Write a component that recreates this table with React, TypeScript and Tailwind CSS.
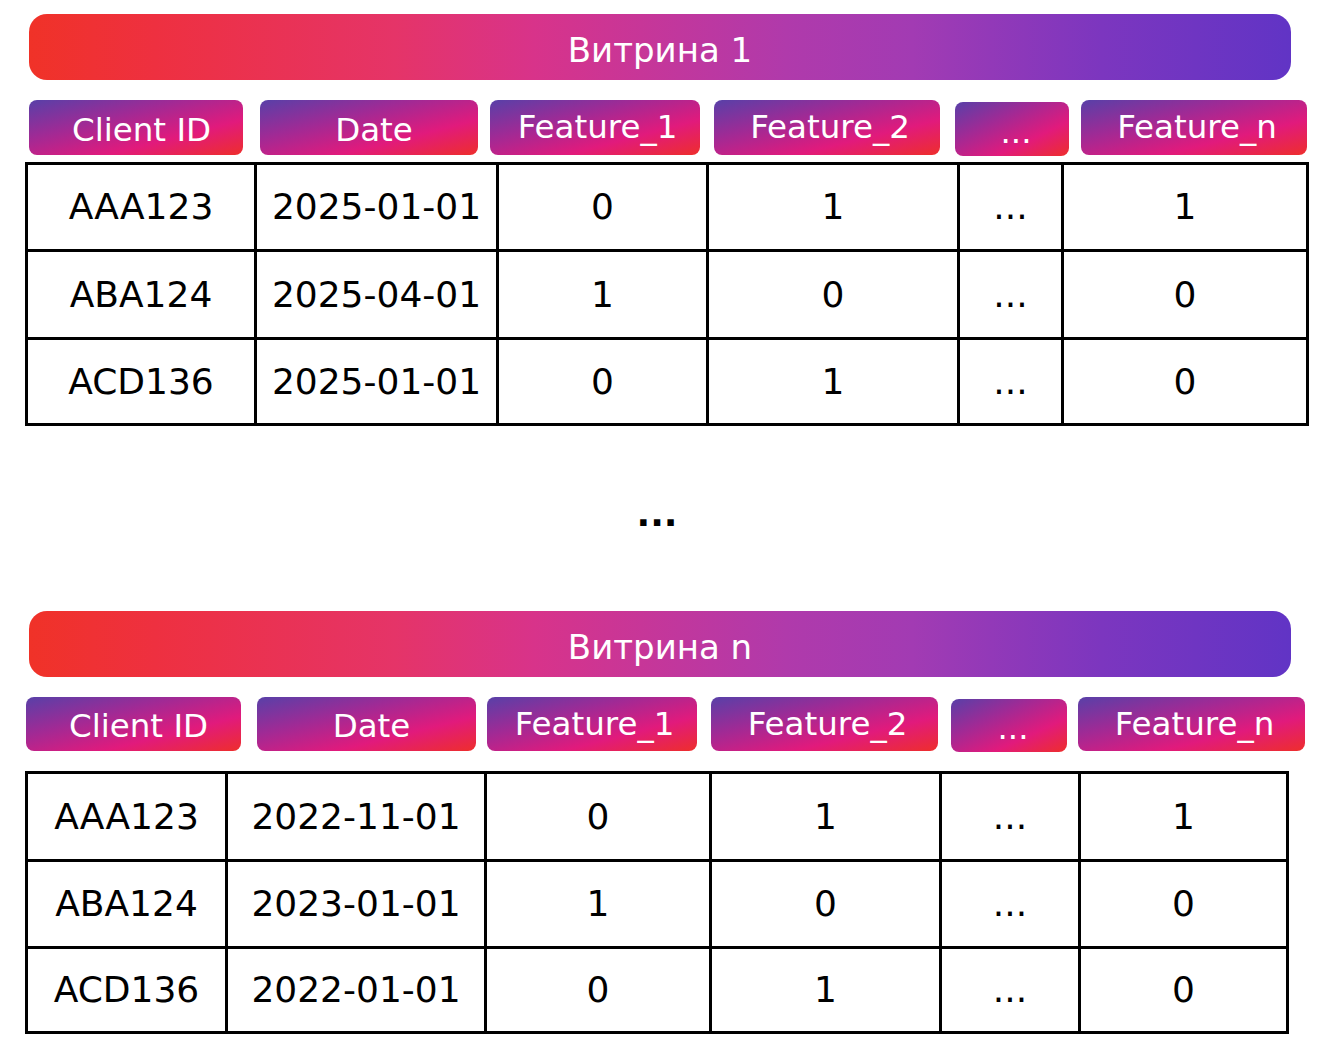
import React from 'react';

const banner =
  'bg-[linear-gradient(to_right,#f03228_0%,#ee3040_10%,#e53468_29%,#d8338a_40%,#b03aab_60%,#a23bb3_70%,#7c36bf_85%,#6134c5_100%)]';
const pill =
  'bg-[linear-gradient(to_bottom_right,#5840a8_0%,#a02a95_35%,#e11a7c_68%,#ee2e2c_100%)]';

type Head = { label: string; cls: string };

const heads1: Head[] = [
  { label: 'Client ID', cls: 'ml-[29px] w-[214px] h-[55px] pt-[5px] pl-[11px]' },
  { label: 'Date', cls: 'ml-[17px] w-[218px] h-[55px] pt-[5px] pl-[10px]' },
  { label: 'Feature_1', cls: 'ml-[12px] w-[210px] h-[55px] pl-[5px]' },
  { label: 'Feature_2', cls: 'ml-[14px] w-[226px] h-[55px] pl-[6px]' },
  { label: '...', cls: 'ml-[15px] w-[114px] h-[54px] mt-[2px] pt-[6px] pl-[8px]' },
  { label: 'Feature_n', cls: 'ml-[12px] w-[226px] h-[55px] pl-[6px]' },
];

const heads2: Head[] = [
  { label: 'Client ID', cls: 'ml-[26px] w-[215px] h-[54px] pt-[5px] pl-[10px]' },
  { label: 'Date', cls: 'ml-[16px] w-[219px] h-[54px] pt-[5px] pl-[10px]' },
  { label: 'Feature_1', cls: 'ml-[11px] w-[210px] h-[54px] pl-[5px]' },
  { label: 'Feature_2', cls: 'ml-[14px] w-[227px] h-[54px] pl-[6px]' },
  { label: '...', cls: 'ml-[13px] w-[116px] h-[53px] mt-[2px] pt-[6px] pl-[8px]' },
  { label: 'Feature_n', cls: 'ml-[11px] w-[227px] h-[54px] pl-[6px]' },
];

const rows1 = [
  ['AAA123', '2025-01-01', '0', '1', '...', '1'],
  ['ABA124', '2025-04-01', '1', '0', '...', '0'],
  ['ACD136', '2025-01-01', '0', '1', '...', '0'],
];

const rows2 = [
  ['AAA123', '2022-11-01', '0', '1', '...', '1'],
  ['ABA124', '2023-01-01', '1', '0', '...', '0'],
  ['ACD136', '2022-01-01', '0', '1', '...', '0'],
];

function Banner({ title }: { title: string }) {
  return (
    <div
      className={`${banner} ml-[29px] w-[1262px] h-[66px] rounded-[18px] flex items-center justify-center pt-[5px] text-white text-[34px] leading-none`}
    >
      {title}
    </div>
  );
}

function Heads({ items }: { items: Head[] }) {
  return (
    <div className="flex items-start">
      {items.map((h, i) => (
        <div
          key={i}
          className={`${pill} ${h.cls} rounded-[8px] flex items-center justify-center text-white text-[32.5px] leading-none`}
        >
          {h.label}
        </div>
      ))}
    </div>
  );
}

function Grid({ rows, cols, heights }: { rows: string[][]; cols: string; heights: string[] }) {
  return (
    <div className={`ml-[25px] inline-grid ${cols} gap-[3px] bg-black p-[3px]`}>
      {rows.map((r, ri) =>
        r.map((c, ci) => (
          <div
            key={`${ri}-${ci}`}
            className={`${heights[ri]} bg-white flex items-center justify-center text-black text-[36px] leading-none`}
          >
            {c}
          </div>
        ))
      )}
    </div>
  );
}

export default function App() {
  return (
    <div className="w-[1332px] h-[1052px] bg-white pt-[14px] font-['DejaVu_Sans','Liberation_Sans',sans-serif]">
      <Banner title="Витрина 1" />
      <div className="mt-[20px]">
        <Heads items={heads1} />
      </div>
      <div className="mt-[6px] flex">
        <Grid
          rows={rows1}
          cols="grid-cols-[226px_239px_207px_248px_101px_242px]"
          heights={['h-[84px]', 'h-[85px]', 'h-[83px]']}
        />
      </div>
      <div className="h-[185px] flex items-center justify-center pb-[10px] pr-[18px] text-black text-[36px] font-bold leading-none">
        ...
      </div>
      <Banner title="Витрина n" />
      <div className="mt-[20px]">
        <Heads items={heads2} />
      </div>
      <div className="mt-[19px] flex">
        <Grid
          rows={rows2}
          cols="grid-cols-[197px_256px_222px_227px_136px_205px]"
          heights={['h-[85px]', 'h-[84px]', 'h-[82px]']}
        />
      </div>
    </div>
  );
}
